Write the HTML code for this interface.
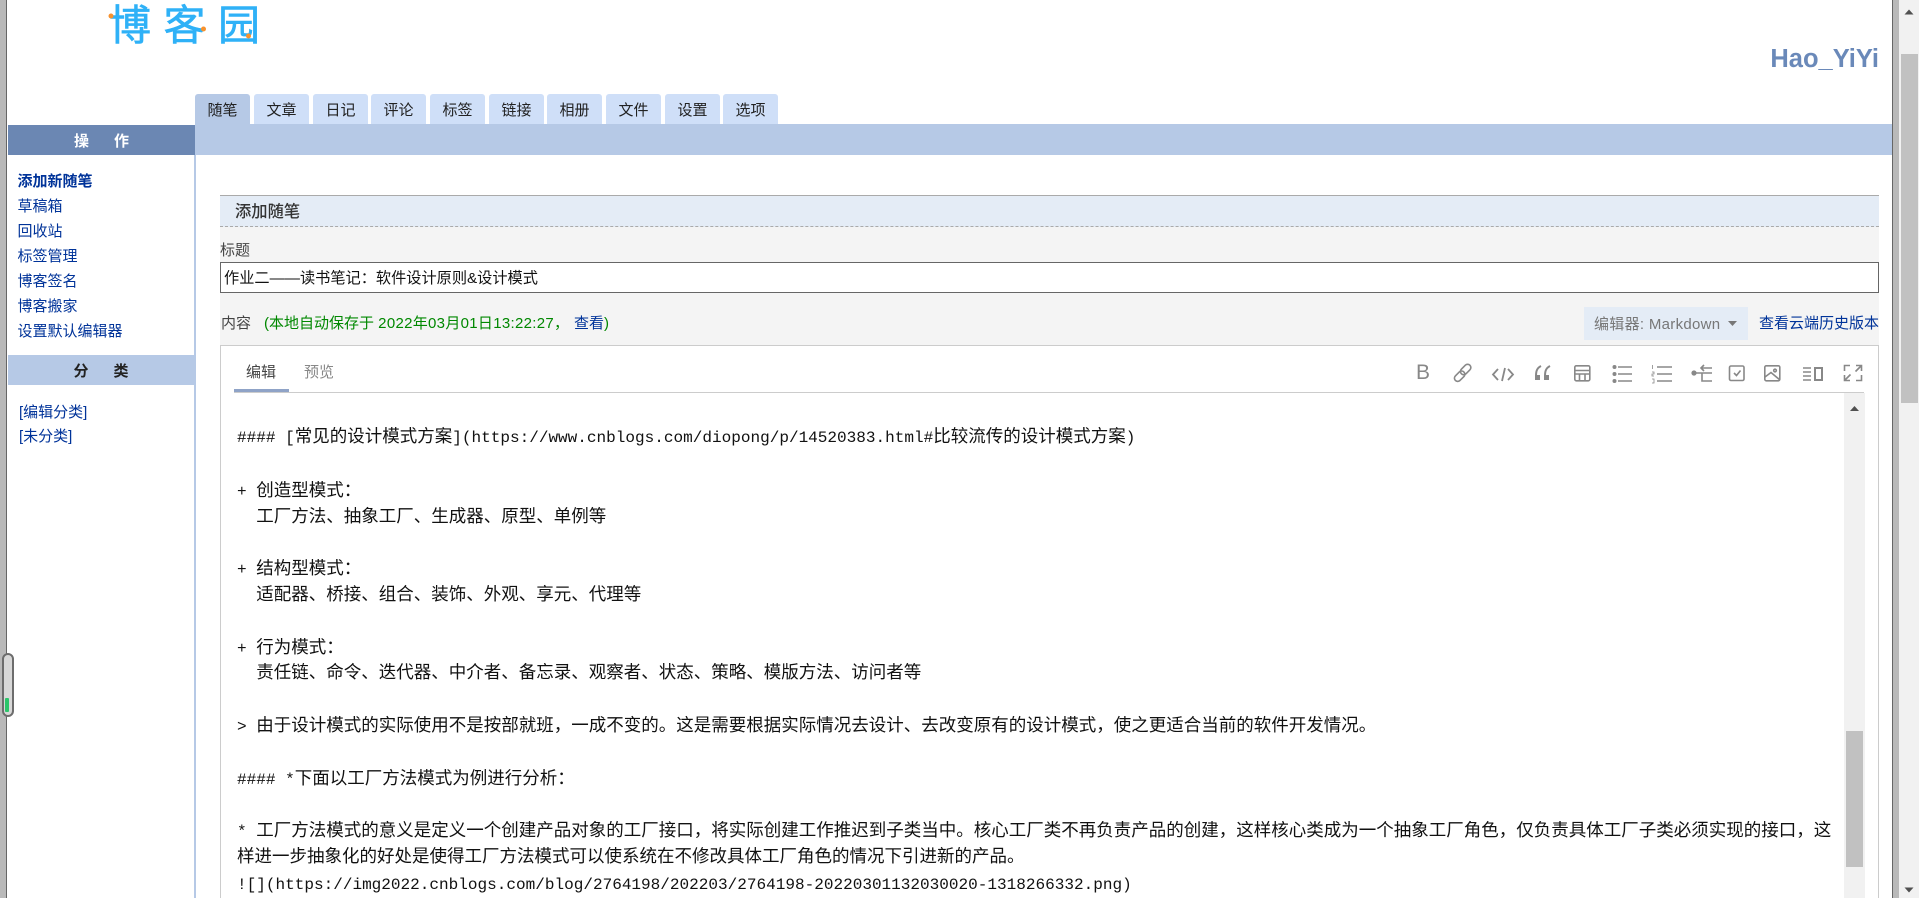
<!DOCTYPE html>
<html lang="zh">
<head>
<meta charset="utf-8">
<title>添加随笔</title>
<style>
html,body{margin:0;padding:0;width:1919px;height:898px;overflow:hidden;background:#fff}
body{position:relative;font-family:"Liberation Sans","Noto Sans CJK SC",sans-serif;font-size:15px;color:#333}
.a{position:absolute;white-space:nowrap}
a{color:#039;text-decoration:none}
.tab{position:absolute;top:94px;width:55px;height:30px;background:#cfdff8;border-radius:3px 3px 0 0;text-align:center;line-height:33px;color:#222}
.side{position:absolute;left:17.500px;line-height:25px;height:25px;white-space:nowrap;color:#039}
.ln{position:absolute;left:237px;height:26px;line-height:26px;white-space:pre;font-size:17.500px;color:#111;font-family:"Liberation Sans","Noto Sans CJK SC",sans-serif}
.m{font-family:"Liberation Mono",monospace;font-size:16.050px}
</style>
</head>
<body>
<!-- window edges -->
<div class="a" style="left:0;top:0;width:6px;height:898px;background:#b9b9b9"></div>
<div class="a" style="left:6px;top:0;width:1px;height:898px;background:#666"></div>
<div class="a" style="left:1892px;top:0;width:1px;height:898px;background:#666"></div>
<div class="a" style="left:1893px;top:0;width:6px;height:898px;background:#b9b9b9"></div>
<div class="a" style="left:1899px;top:0;width:20px;height:898px;background:#f1f1f1"></div>
<div class="a" style="left:1901px;top:54px;width:17px;height:349px;background:#c1c1c1"></div>
<svg class="a" style="left:1899px;top:0" width="20" height="898"><path d="M5.500 14.500L10 9.500L14.500 14.500Z" fill="#505050"/><path d="M5.500 887.500L10 892.500L14.500 887.500Z" fill="#505050"/></svg>
<!-- left gadget -->
<div class="a" style="left:2px;top:653px;width:8px;height:60px;border:2px solid #6d6d6d;border-radius:6px;background:#d8d8d8"></div>
<div class="a" style="left:5px;top:698px;width:4px;height:14px;background:#2cc56b;border-radius:1px"></div>
<!-- logo -->
<div class="a" style="left:109px;top:-1px;font-family:'WenQuanYi Zen Hei','Noto Sans CJK SC',sans-serif;font-size:42px;line-height:48px;letter-spacing:12.500px;color:#2fb1f7;-webkit-text-stroke:.6px #2fb1f7">博客园</div>
<svg class="a" style="left:100px;top:0" width="170" height="50"><circle cx="11" cy="16" r="2.500" fill="#f7922e"/><circle cx="103.500" cy="29" r="2.500" fill="#f7922e"/><circle cx="148.500" cy="36" r="2.500" fill="#f7922e"/></svg>
<div class="a" style="right:40px;top:44px;font-size:25.500px;line-height:30px;font-weight:bold;color:#6a89b9">Hao_YiYi</div>
<!-- tabs -->
<div class="tab" style="left:195px;background:#b6c9e6">随笔</div>
<div class="tab" style="left:254px">文章</div>
<div class="tab" style="left:313px">日记</div>
<div class="tab" style="left:371px">评论</div>
<div class="tab" style="left:430px">标签</div>
<div class="tab" style="left:489px">链接</div>
<div class="tab" style="left:547px">相册</div>
<div class="tab" style="left:606px">文件</div>
<div class="tab" style="left:665px">设置</div>
<div class="tab" style="left:723px">选项</div>
<div class="a" style="left:195px;top:124px;width:1697px;height:31px;background:#b6c9e6"></div>
<!-- sidebar -->
<div class="a" style="left:8px;top:125px;width:187px;height:30px;background:#6b87b3;color:#fff;font-weight:bold;text-align:center;line-height:33px">操<span style="margin-left:25px">作</span></div>
<div class="a" style="left:194px;top:155px;width:2px;height:743px;background:#b6c9e6"></div>
<div class="side" style="top:169px;font-weight:bold">添加新随笔</div>
<div class="side" style="top:194px">草稿箱</div>
<div class="side" style="top:219px">回收站</div>
<div class="side" style="top:244px">标签管理</div>
<div class="side" style="top:269px">博客签名</div>
<div class="side" style="top:294px">博客搬家</div>
<div class="side" style="top:319px">设置默认编辑器</div>
<div class="a" style="left:8px;top:355px;width:186px;height:30px;background:#b6c9e6;color:#222;font-weight:bold;text-align:center;line-height:33px">分<span style="margin-left:25px">类</span></div>
<div class="side" style="left:19px;top:400px">[编辑分类]</div>
<div class="side" style="left:19px;top:424px">[未分类]</div>
<!-- content panel -->
<div class="a" style="left:220px;top:195px;width:1659px;height:703px;background:#f4f4f4"></div>
<div class="a" style="left:220px;top:195px;width:1659px;height:30px;background:#e4ecf6;border-top:1px solid #aaa;border-bottom:1px dashed #aaa;font-size:16.300px;line-height:32px;color:#333"><span style="margin-left:15px;font-weight:500">添加随笔</span></div>
<div class="a" style="left:220px;top:241px;line-height:20px;color:#444">标题</div>
<div class="a" style="left:220px;top:262px;width:1656.500px;height:29px;background:#fff;border:1.5px solid #666;line-height:31px;color:#111;font-size:15.200px"><span style="margin-left:3px">作业二——读书笔记：软件设计原则&amp;设计模式</span></div>
<div class="a" style="left:221px;top:314px;line-height:20px;color:#444">内容</div>
<div class="a" style="left:264px;top:314px;line-height:20px;color:#080">(本地自动保存于 <span style="letter-spacing:.3px">2022年03月01日13:22:27</span>，</div>
<a class="a" style="left:574px;top:314px;line-height:20px">查看</a>
<div class="a" style="left:604px;top:314px;line-height:20px;color:#080">)</div>
<div class="a" style="left:1584px;top:307px;width:164px;height:33px;background:#e4ecf6"></div>
<div class="a" style="left:1594px;top:307px;height:33px;line-height:35px;color:#777;letter-spacing:.3px">编辑器: Markdown</div>
<svg class="a" style="left:1728px;top:321px" width="9" height="5"><path d="M0 0H9L4.500 5Z" fill="#777"/></svg>
<a class="a" style="left:1759px;top:314px;line-height:20px">查看云端历史版本</a>
<!-- editor -->
<div class="a" style="left:220px;top:345px;width:1657px;height:553px;background:#fff;border:1px solid #ccc;border-bottom:0"></div>
<div class="a" style="left:246px;top:363px;line-height:20px;color:#444">编辑</div>
<div class="a" style="left:304px;top:363px;line-height:20px;color:#888">预览</div>
<div class="a" style="left:234px;top:392px;width:1630px;height:1px;background:#ccc"></div>
<div class="a" style="left:234px;top:389px;width:55px;height:3px;background:#8fa3c7"></div>
<div class="a" style="left:1416px;top:361px;font-size:21px;line-height:24px;color:#888">B</div>
<svg class="a" style="left:1440px;top:358px" width="430" height="32" fill="none" stroke="#888" stroke-width="1.600">
<!-- link -->
<g transform="rotate(-45 23 14.500)"><rect x="12" y="11.500" width="12" height="6.500" rx="3.200"/><rect x="21" y="11" width="12" height="6.500" rx="3.200"/></g>
<!-- code -->
<path d="M58 11L53 16.500L58 22M65 10L62 23M68 11L73 16.500L68 22" stroke-width="1.800"/>
<!-- quote -->
<path d="M101 8C97 10 96 13 96 18M110 8C106 10 105 13 105 18" stroke-width="2"/><rect x="95" y="17" width="5" height="5" fill="#888" stroke="none"/><rect x="104" y="17" width="5" height="5" fill="#888" stroke="none"/>
<!-- table -->
<rect x="134.800" y="7.800" width="15" height="15" rx="1.500"/><path d="M135 12.500H150M135 16H150M139.500 16V23M145 16V23"/>
<!-- ul -->
<path d="M178 9H192M178 16H192M178 23H192"/><circle cx="174.500" cy="9" r="1.200" fill="#888"/><circle cx="174.500" cy="16" r="1.200" fill="#888"/><circle cx="174.500" cy="23" r="1.200" fill="#888"/>
<!-- ol -->
<path d="M217 9H232M217 16H232M217 23H232"/><path d="M212.500 7V11M212 14H214V16H212V18H214M212 21H214V25H212" stroke-width=".8"/>
<!-- outline -->
<path d="M254 15H272M264 7L261 10L264 13M261 10H272M262 15V23H272"/><circle cx="254" cy="15" r="1.800" fill="#888"/>
<!-- check -->
<rect x="289.500" y="8" width="14.500" height="14.500" rx="1.500"/><path d="M294 15L296.500 17.500L300.500 12.500"/>
<!-- image -->
<rect x="324.800" y="7.800" width="15" height="15" rx="1.500"/><path d="M325 19L331 14.500L340 22"/><circle cx="335" cy="12.500" r="1.300"/>
<!-- side by side -->
<path d="M363 10H371M363 14H371M363 18H371M363 22H371"/><rect x="375" y="10" width="7" height="12" stroke-width="2"/>
<!-- fullscreen -->
<path d="M404.500 13V7.500H410M416 7.500H421.500V13M404.500 17V22.500H410M416 22.500H421.500V17M415.500 13.500L421 8M410.500 16.500L405 22"/>
</svg>
<!-- editor textarea scrollbar -->
<div class="a" style="left:1844px;top:393px;width:21px;height:505px;background:#f1f1f1"></div>
<div class="a" style="left:1846px;top:731px;width:17px;height:136px;background:#c1c1c1"></div>
<svg class="a" style="left:1844px;top:400px" width="21" height="14"><path d="M6 11L10.500 6L15 11Z" fill="#505050"/></svg>
<!-- text -->
<div class="ln" style="top:423px"><span class="m">#### [</span>常见的设计模式方案<span class="m">](https://www.cnblogs.com/diopong/p/14520383.html#</span>比较流传的设计模式方案<span class="m">)</span></div>
<div class="ln" style="top:477px"><span class="m">+ </span>创造型模式：</div>
<div class="ln" style="top:503px"><span class="m">  </span>工厂方法、抽象工厂、生成器、原型、单例等</div>
<div class="ln" style="top:555px"><span class="m">+ </span>结构型模式：</div>
<div class="ln" style="top:581px"><span class="m">  </span>适配器、桥接、组合、装饰、外观、享元、代理等</div>
<div class="ln" style="top:634px"><span class="m">+ </span>行为模式：</div>
<div class="ln" style="top:659px"><span class="m">  </span>责任链、命令、迭代器、中介者、备忘录、观察者、状态、策略、模版方法、访问者等</div>
<div class="ln" style="top:712px"><span class="m">&gt; </span>由于设计模式的实际使用不是按部就班，一成不变的。这是需要根据实际情况去设计、去改变原有的设计模式，使之更适合当前的软件开发情况。</div>
<div class="ln" style="top:765px"><span class="m">#### *</span>下面以工厂方法模式为例进行分析：</div>
<div class="ln" style="top:817px"><span class="m">* </span>工厂方法模式的意义是定义一个创建产品对象的工厂接口，将实际创建工作推迟到子类当中。核心工厂类不再负责产品的创建，这样核心类成为一个抽象工厂角色，仅负责具体工厂子类必须实现的接口，这</div>
<div class="ln" style="top:843px">样进一步抽象化的好处是使得工厂方法模式可以使系统在不修改具体工厂角色的情况下引进新的产品。</div>
<div class="ln" style="top:870px"><span class="m">![](https://img2022.cnblogs.com/blog/2764198/202203/2764198-20220301132030020-1318266332.png)</span></div>
</body>
</html>
